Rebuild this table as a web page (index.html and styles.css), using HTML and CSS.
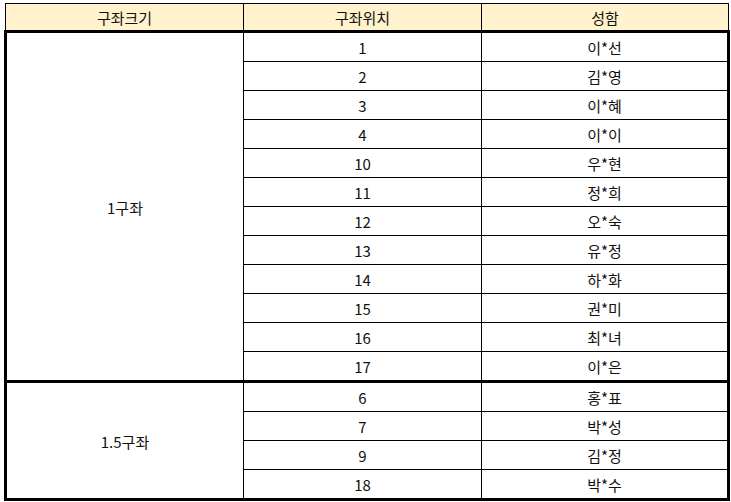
FILE: index.html
```html
<!DOCTYPE html>
<html lang="ko">
<head>
<meta charset="utf-8">
<title>구좌</title>
<link rel="stylesheet" href="styles.css">
</head>
<body>
<table class="sheet">
  <colgroup>
    <col class="c1">
    <col class="c2">
    <col class="c3">
  </colgroup>
  <thead>
    <tr class="head">
      <th>구좌크기</th>
      <th>구좌위치</th>
      <th>성함</th>
    </tr>
  </thead>
  <tbody class="group">
    <tr><td class="size" rowspan="12">1구좌</td><td>1</td><td>이*선</td></tr>
    <tr><td>2</td><td>김*영</td></tr>
    <tr><td>3</td><td>이*혜</td></tr>
    <tr><td>4</td><td>이*이</td></tr>
    <tr><td>10</td><td>우*현</td></tr>
    <tr><td>11</td><td>정*희</td></tr>
    <tr><td>12</td><td>오*숙</td></tr>
    <tr><td>13</td><td>유*정</td></tr>
    <tr><td>14</td><td>하*화</td></tr>
    <tr><td>15</td><td>권*미</td></tr>
    <tr><td>16</td><td>최*녀</td></tr>
    <tr><td>17</td><td>이*은</td></tr>
  </tbody>
  <tbody class="group">
    <tr><td class="size" rowspan="4">1.5구좌</td><td>6</td><td>홍*표</td></tr>
    <tr><td>7</td><td>박*성</td></tr>
    <tr><td>9</td><td>김*정</td></tr>
    <tr><td>18</td><td>박*수</td></tr>
  </tbody>
</table>
</body>
</html>
```

FILE: styles.css
```css
html, body {
  margin: 0;
  background: #fff;
}
body {
  padding: 3px 0 0 4px;
  font-family: "Noto Sans CJK KR", "Noto Sans", sans-serif;
  font-size: 15px;
  color: #111;
}
.sheet {
  border-collapse: collapse;
  table-layout: fixed;
  width: 723px;
}
.c1 { width: 238px; }
.c2 { width: 238px; }
.c3 { width: 247px; }
.sheet th,
.sheet td {
  border: 1px solid #000;
  padding: 2px 0 0;
  text-align: center;
  vertical-align: middle;
  font-weight: normal;
  line-height: 20px;
}
.head th {
  background: #fff2cc;
  height: 24px;
}
.group td {
  height: 26px;
}
.group {
  border: 3px solid #000;
}
.group td.size {
  border-left: 3px solid #000;
}
```
